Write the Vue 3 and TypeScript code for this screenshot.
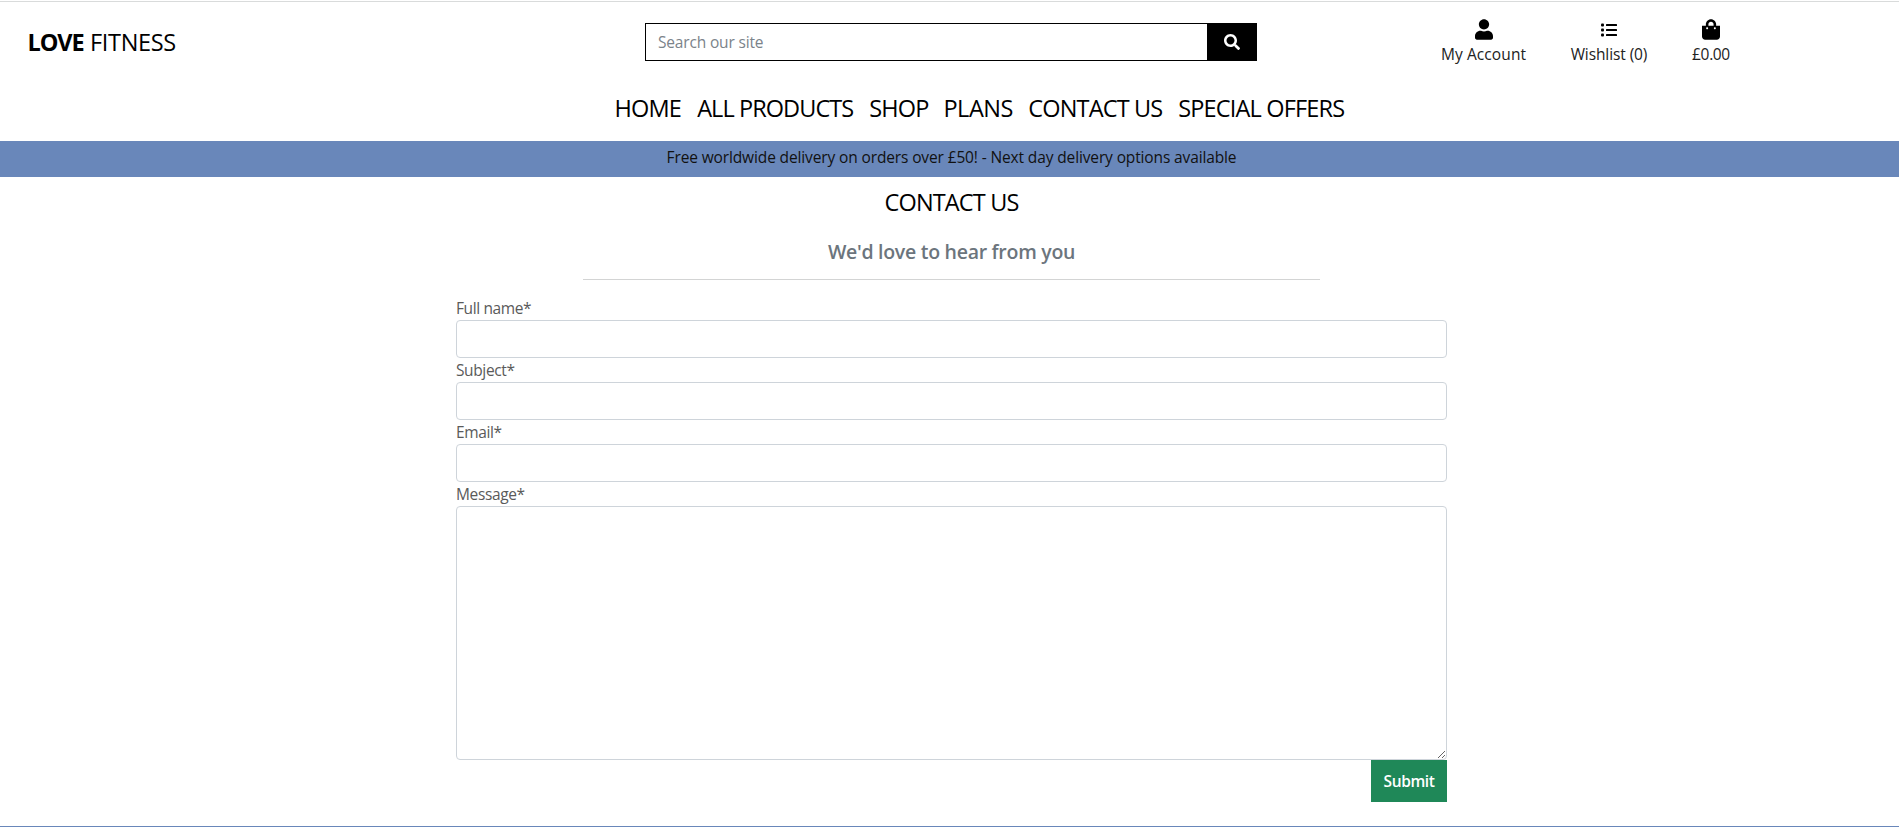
<script setup lang="ts">
import { ref } from 'vue'

interface NavItem { label: string; key: string }
interface Field { id: string; label: string }

const navItems: NavItem[] = [
  { label: 'HOME', key: 'home' },
  { label: 'ALL PRODUCTS', key: 'products' },
  { label: 'SHOP', key: 'shop' },
  { label: 'PLANS', key: 'plans' },
  { label: 'CONTACT US', key: 'contact' },
  { label: 'SPECIAL OFFERS', key: 'offers' },
]

const fields: Field[] = [
  { id: 'name', label: 'Full name*' },
  { id: 'subject', label: 'Subject*' },
  { id: 'email', label: 'Email*' },
]

const query = ref('')
const values = ref<Record<string, string>>({ name: '', subject: '', email: '' })
const message = ref('')
</script>

<template>
  <div class="page">
    <header class="header">
      <a class="logo"><strong>LOVE</strong><span>FITNESS</span></a>
      <form class="search" @submit.prevent>
        <input v-model="query" type="text" placeholder="Search our site" />
        <button type="submit" aria-label="Search">
          <svg viewBox="0 0 512 512" width="16" height="16"><path fill="currentColor" d="M505 442.700L405.300 343c-4.500-4.500-10.600-7-17-7H372c27.600-35.300 44-79.700 44-128C416 93.100 322.900 0 208 0S0 93.100 0 208s93.100 208 208 208c48.300 0 92.700-16.400 128-44v16.300c0 6.400 2.500 12.500 7 17l99.700 99.700c9.400 9.400 24.600 9.400 33.900 0l28.300-28.300c9.400-9.400 9.400-24.600.1-34zM208 336c-70.700 0-128-57.200-128-128 0-70.700 57.200-128 128-128 70.700 0 128 57.200 128 128 0 70.700-57.200 128-128 128z" /></svg>
        </button>
      </form>
      <div class="actions">
        <a class="action account">
          <svg viewBox="0 0 448 512" width="18" height="21"><path fill="currentColor" d="M224 256c70.700 0 128-57.300 128-128S294.700 0 224 0 96 57.300 96 128s57.300 128 128 128zm89.600 32h-16.700c-22.200 10.200-46.900 16-72.900 16s-50.600-5.800-72.900-16h-16.700C60.200 288 0 348.200 0 422.400V464c0 26.500 21.500 48 48 48h352c26.500 0 48-21.500 48-48v-41.600c0-74.200-60.200-134.400-134.400-134.400z" /></svg>
          <span>My Account</span>
        </a>
        <a class="action wishlist">
          <svg viewBox="0 0 16 21" width="16" height="21"><g fill="currentColor"><rect x="0" y="4.500" width="3" height="3" rx="1" /><rect x="0" y="9.500" width="3" height="3" rx="1" /><rect x="0" y="14.500" width="3" height="3" rx="1" /><rect x="5" y="5" width="11" height="2" rx=".5" /><rect x="5" y="10" width="11" height="2" rx=".5" /><rect x="5" y="15" width="11" height="2" rx=".5" /></g></svg>
          <span>Wishlist (0)</span>
        </a>
        <a class="action bag">
          <svg viewBox="0 0 448 512" width="18" height="21"><path fill="currentColor" d="M352 160v-32C352 57.400 294.600 0 224 0S96 57.400 96 128v32H0v272c0 44.200 35.800 80 80 80h288c44.200 0 80-35.800 80-80V160h-96zm-192-32c0-35.300 28.700-64 64-64s64 28.700 64 64v32H160v-32zm160 120c-13.300 0-24-10.700-24-24s10.700-24 24-24 24 10.700 24 24-10.700 24-24 24zm-192 0c-13.300 0-24-10.700-24-24s10.700-24 24-24 24 10.700 24 24-10.700 24-24 24z" /></svg>
          <span>£0.00</span>
        </a>
      </div>
    </header>

    <nav class="nav">
      <a v-for="item in navItems" :key="item.key" :class="item.key">{{ item.label }}</a>
    </nav>

    <div class="banner">Free worldwide delivery on orders over £50! - Next day delivery options available</div>

    <main class="main">
      <h2>CONTACT US</h2>
      <h5>We'd love to hear from you</h5>
      <hr />
      <form class="form" @submit.prevent>
        <template v-for="field in fields" :key="field.id">
          <label :for="field.id">{{ field.label }}</label>
          <input :id="field.id" v-model="values[field.id]" type="text" />
        </template>
        <label for="message">Message*</label>
        <textarea id="message" v-model="message"></textarea>
        <button class="submit" type="submit">Submit</button>
      </form>
    </main>
    <footer class="footer"></footer>
  </div>
</template>

<style>
body {
  margin: 0;
  background: #fff;
}
</style>

<style scoped>
* {
  box-sizing: border-box;
}
.page {
  display: flex;
  flex-direction: column;
  height: 827px;
  padding-top: 1px;
  overflow: hidden;
  font-family: "Open Sans", "Noto Sans", sans-serif;
  font-size: 15.5px;
  line-height: 24px;
  color: #000;
}
.header {
  display: grid;
  grid-template-columns: 645px 612px 1fr;
  height: 84px;
  flex: none;
  border-top: 1px solid #d9dbdb;
}
.logo {
  display: flex;
  padding: 22px 0 0 27.500px;
  font-size: 23.5px;
  line-height: 36px;
}
.logo strong {
  width: 62.500px;
  font-weight: 700;
  letter-spacing: -1.1px;
}
.logo span {
  letter-spacing: -0.32px;
}
.search {
  display: flex;
  height: 38px;
  margin-top: 21px;
}
.search input {
  flex: 1;
  min-width: 0;
  padding: 0 12px;
  border: 1px solid #000;
  border-right: 0;
  border-radius: 0;
  outline: none;
  font: inherit;
  letter-spacing: -0.17px;
}
.search input::placeholder {
  color: #7b838a;
  opacity: 1;
}
.search button {
  display: flex;
  align-items: center;
  justify-content: center;
  width: 50px;
  padding: 0 1px 0 0;
  border: 0;
  background: #000;
  color: #fff;
}
.actions {
  display: flex;
  gap: 43px;
  padding: 17px 0 0 183px;
}
.action {
  display: flex;
  flex-direction: column;
  align-items: center;
  white-space: nowrap;
  color: #222;
}
.action svg {
  display: block;
  margin-bottom: 2px;
  color: #000;
}
.account {
  width: 87px;
  letter-spacing: 0.1px;
}
.wishlist {
  width: 78px;
  letter-spacing: -0.1px;
}
.bag {
  width: 40px;
  letter-spacing: -0.35px;
}
.nav {
  display: grid;
  grid-template-columns: 82.700px 172px 74.300px 84.800px 149.900px 170px;
  height: 56px;
  padding: 5px 0 0 614.500px;
  flex: none;
  font-size: 23.5px;
  line-height: 36px;
  white-space: nowrap;
}
.home { letter-spacing: -0.85px; }
.products { letter-spacing: -0.93px; }
.shop { letter-spacing: -0.8px; }
.plans { letter-spacing: -0.5px; }
.contact { letter-spacing: -0.83px; }
.offers { letter-spacing: -0.82px; }
.banner {
  height: 36px;
  flex: none;
  padding: 4px 0 0 4px;
  background: #6987ba;
  color: #111;
  letter-spacing: -0.13px;
  text-align: center;
}
.main {
  display: flex;
  flex-direction: column;
  align-items: center;
  width: 991px;
  margin-left: 456px;
}
h2 {
  margin: 7px 0 0;
  font-size: 23.5px;
  font-weight: 400;
  line-height: 36px;
  letter-spacing: -0.85px;
}
h5 {
  margin: 20px 0 0;
  font-size: 19.5px;
  font-weight: 600;
  line-height: 24px;
  letter-spacing: -0.28px;
  color: #6c757d;
}
hr {
  width: 737px;
  height: 1px;
  margin: 15px 0 16px;
  border: 0;
  background: #d3d4d4;
}
.form {
  display: flex;
  flex-direction: column;
  width: 100%;
}
.form label {
  height: 24px;
  letter-spacing: -0.38px;
  color: #5a5a5a;
}
.form input,
.form textarea {
  display: block;
  width: 100%;
  height: 38px;
  padding: 6px 12px;
  border: 1px solid #ced4da;
  border-radius: 4px;
  outline: none;
  background: #fff;
  font: inherit;
}
.form textarea {
  height: 254px;
  resize: vertical;
}
.submit {
  align-self: flex-end;
  width: 76px;
  height: 42px;
  padding: 0;
  border: 0;
  background: #1f8858;
  color: #fff;
  font: inherit;
  font-weight: 600;
  letter-spacing: -0.4px;
}
.footer {
  height: 1px;
  margin-top: auto;
  flex: none;
  background: #6987ba;
}
</style>
